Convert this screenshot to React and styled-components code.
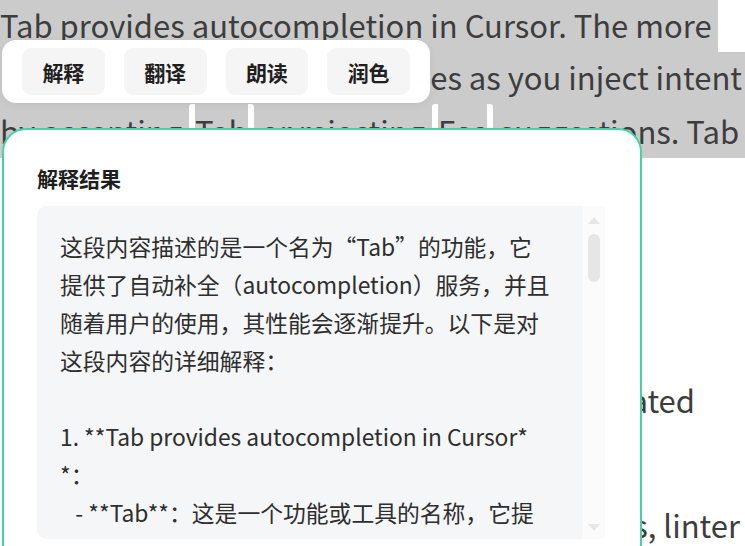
import React from "react";
import styled, { createGlobalStyle } from "styled-components";

const GlobalStyle = createGlobalStyle`
  html, body {
    margin: 0;
    padding: 0;
    background: #ffffff;
  }
  body {
    font-family: "Noto Sans CJK SC", "Noto Sans", sans-serif;
  }
`;

const Screen = styled.div`
  position: relative;
  width: 745px;
  height: 546px;
  overflow: hidden;
  background: #fff;
`;

// the underlying document text
const Doc = styled.div`
  display: flex;
  flex-direction: column;
  font-size: 31px;
  color: #3d3d3d;
  white-space: nowrap;
`;

const DocLine = styled.div`
  height: ${(p) => p.$h || 52}px;
  line-height: 50px;
  margin-top: ${(p) => p.$top || 0}px;
  padding-right: ${(p) => p.$pr || 0}px;
  text-align: ${(p) => (p.$right ? "right" : "left")};
  background: ${(p) => (p.$sel ? "#cbcbcb" : "transparent")};
  width: ${(p) => (p.$fit ? "fit-content" : "auto")};
  overflow: hidden;
`;

const Kbd = styled.span`
  display: inline-block;
  border-left: 6px solid #fff;
  border-right: 6px solid #fff;
  border-radius: 3px;
  line-height: 54px;
`;

const Toolbar = styled.div`
  position: absolute;
  top: 40px;
  left: 2px;
  width: 428px;
  height: 63px;
  box-sizing: border-box;
  padding: 8px 20px;
  display: flex;
  gap: 19px;
  background: #fff;
  border-radius: 14px;
  box-shadow: 0 2px 8px rgba(0, 0, 0, 0.06);
`;

const ToolButton = styled.button`
  width: 83px;
  height: 47px;
  border: none;
  border-radius: 9px;
  background: #f5f5f5;
  font-family: "Noto Sans CJK SC", sans-serif;
  font-size: 21px;
  font-weight: 700;
  color: #1f1f1f;
  padding: 0;
`;

const Panel = styled.div`
  position: absolute;
  top: 128px;
  left: 2px;
  width: 640px;
  height: 460px;
  box-sizing: border-box;
  border: 2px solid #45d3a6;
  border-radius: 24px;
  background: #fff;
  padding: 30px 35px 0 33px;
  display: flex;
  flex-direction: column;
  gap: 9px;
`;

const PanelTitle = styled.div`
  font-size: 21px;
  font-weight: 700;
  line-height: 37px;
  color: #1e1e1e;
`;

const ResultBox = styled.div`
  height: 333px;
  display: flex;
  border-radius: 10px 4px 4px 10px;
  overflow: hidden;
  background: #f5f6f8;
`;

const ResultText = styled.div`
  flex: 1;
  overflow: hidden;
  padding: 22px 0 0 23px;
  font-size: 22.8px;
  line-height: 38px;
  color: #2e2e2e;
  white-space: pre-wrap;
  word-break: break-all;
`;

const ScrollRail = styled.div`
  width: 22px;
  flex-shrink: 0;
  display: flex;
  flex-direction: column;
  align-items: center;
  background: #fbfbfb;
`;

const Arrow = styled.div`
  height: 24px;
  width: 100%;
  display: flex;
  justify-content: center;
  align-items: ${(p) => (p.$down ? "flex-start" : "flex-end")};
  margin-top: ${(p) => (p.$down ? "auto" : "0")};
  padding: ${(p) => (p.$down ? "9px 0 0" : "0 0 6px")};
  box-sizing: border-box;

  &::before {
    content: "";
    border-left: 6px solid transparent;
    border-right: 6px solid transparent;
    ${(p) =>
      p.$down
        ? "border-top: 7px solid #e6e6e6;"
        : "border-bottom: 7px solid #e6e6e6;"}
  }
`;

const Thumb = styled.div`
  width: 12px;
  height: 48px;
  margin-top: 4px;
  border-radius: 6px;
  background: #e6e6e6;
`;

const actions = ["解释", "翻译", "朗读", "润色"];

const resultText = `这段内容描述的是一个名为“Tab”的功能，它
提供了自动补全（autocompletion）服务，并且
随着用户的使用，其性能会逐渐提升。以下是对
这段内容的详细解释：

1. **Tab provides autocompletion in Cursor*
*：
   - **Tab**：这是一个功能或工具的名称，它提
供自动补全服务，帮助用户更快地编写代码。
   - **autocompletion**：自动补全，指在用户输入时自动给出建议内容。
   - **Cursor**：一款基于人工智能的代码编辑器。

2. **The more you use it, the better it becomes**：
   - 这句话说明 Tab 会根据用户的使用习惯不断学习，使用得越多，给出的建议就越准确。

3. **as you inject intent by accepting Tab or rejecting Esc suggestions**：
   - **inject intent**：注入意图，指用户通过自己的操作向系统表达需求。
   - **accepting Tab**：按下 Tab 键接受建议。
   - **rejecting Esc**：按下 Esc 键拒绝建议。

总的来说，Tab 是 Cursor 中一个智能的代码补全功能。`;

export default function App() {
  return (
    <>
      <GlobalStyle />
      <Screen>
        <Doc>
          <DocLine $sel $fit $pr={6}>
            Tab provides autocompletion in Cursor. The more
          </DocLine>
          <DocLine $sel $right $pr={3}>
            the better it becomes as you inject intent
          </DocLine>
          <DocLine $sel $h={54}>
            by accepting <Kbd>Tab</Kbd> or rejecting <Kbd>Esc</Kbd>{" "}
            suggestions. Tab
          </DocLine>
          <DocLine $right $pr={50} $top={217}>
            files for coordinated
          </DocLine>
          <DocLine $right $pr={5} $top={73}>
            recent changes, linter
          </DocLine>
        </Doc>

        <Toolbar>
          {actions.map((label) => (
            <ToolButton key={label}>{label}</ToolButton>
          ))}
        </Toolbar>

        <Panel>
          <PanelTitle>解释结果</PanelTitle>
          <ResultBox>
            <ResultText>{resultText}</ResultText>
            <ScrollRail>
              <Arrow />
              <Thumb />
              <Arrow $down />
            </ScrollRail>
          </ResultBox>
        </Panel>
      </Screen>
    </>
  );
}
